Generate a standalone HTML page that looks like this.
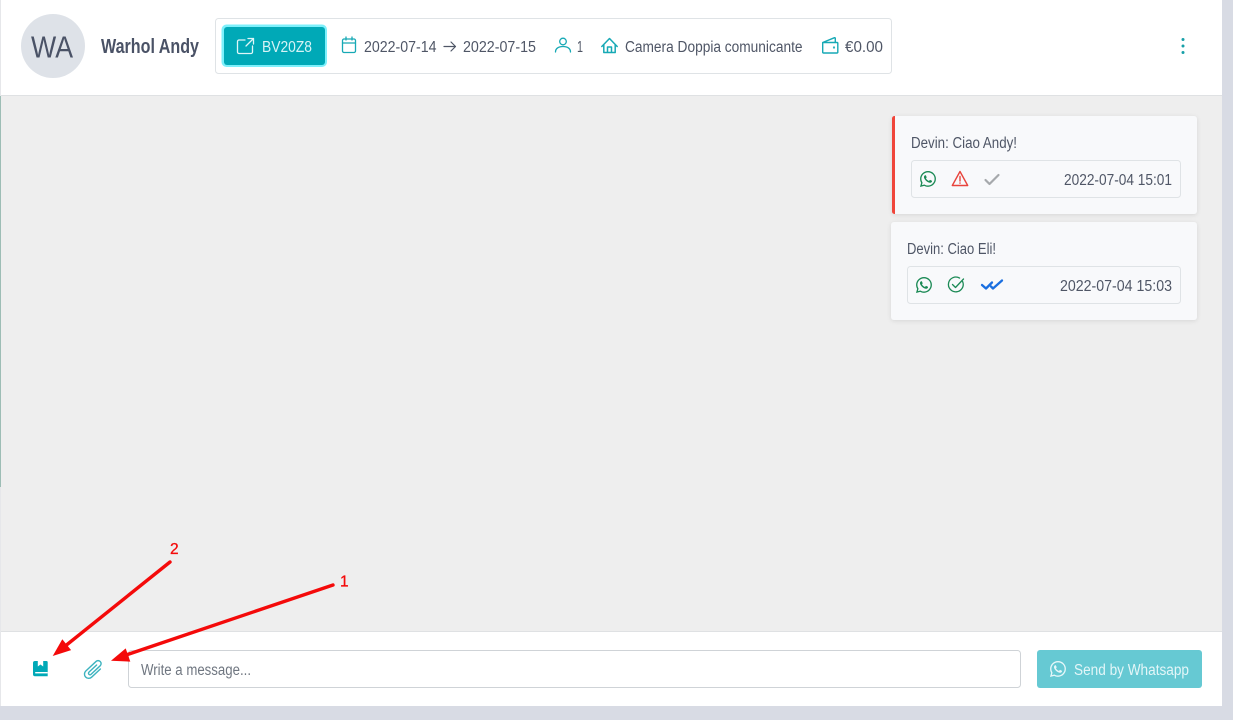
<!DOCTYPE html>
<html lang="en">
<head>
<meta charset="utf-8">
<title>Warhol Andy</title>
<style>
html,body{margin:0;padding:0;width:1233px;height:720px;overflow:hidden;background:#d8dbe4}
svg{display:block}
text{font-family:"Liberation Sans",sans-serif;fill:#4f5666;font-size:15.5px}
.ic{fill:none;stroke:#17a9b5;stroke-width:1.3;stroke-linecap:round;stroke-linejoin:round}
</style>
</head>
<body>
<svg width="1233" height="720" viewBox="0 0 1233 720" xmlns="http://www.w3.org/2000/svg">
<defs>
<path id="wa" d="M13.601 2.326A7.854 7.854 0 0 0 7.994 0C3.627 0 .068 3.558.064 7.926c0 1.399.366 2.76 1.057 3.965L0 16l4.204-1.102a7.933 7.933 0 0 0 3.79.965h.004c4.368 0 7.926-3.558 7.93-7.93A7.898 7.898 0 0 0 13.6 2.326zM7.994 14.521a6.573 6.573 0 0 1-3.356-.92l-.24-.144-2.494.654.666-2.433-.156-.251a6.56 6.56 0 0 1-1.007-3.505c0-3.626 2.957-6.584 6.591-6.584a6.56 6.56 0 0 1 4.66 1.931 6.557 6.557 0 0 1 1.928 4.66c-.004 3.639-2.961 6.592-6.592 6.592zm3.615-4.934c-.197-.099-1.17-.578-1.353-.646-.182-.065-.315-.099-.445.099-.133.197-.513.646-.627.775-.114.133-.232.148-.43.05-.197-.1-.836-.308-1.592-.985-.59-.525-.985-1.175-1.103-1.372-.114-.198-.011-.304.088-.403.087-.088.197-.232.296-.346.1-.114.133-.198.198-.33.065-.134.034-.248-.015-.347-.05-.099-.445-1.076-.612-1.47-.16-.389-.323-.335-.445-.34-.114-.007-.247-.007-.38-.007a.729.729 0 0 0-.529.247c-.182.198-.691.677-.691 1.654 0 .977.71 1.916.81 2.049.098.133 1.394 2.132 3.383 2.992.47.205.84.326 1.129.418.475.152.904.129 1.246.08.38-.058 1.171-.48 1.338-.943.164-.464.164-.86.114-.943-.049-.084-.182-.133-.38-.232z"/>
<filter id="sh" x="-5%" y="-10%" width="110%" height="125%"><feDropShadow dx="0" dy="1" stdDeviation="2" flood-color="#000" flood-opacity=".1"/></filter>
</defs>

<!-- page frame -->
<rect width="1233" height="720" fill="#d8dbe4"/>
<rect x="0" y="0" width="1222" height="706" fill="#fff"/>
<rect x="0" y="0" width="1" height="706" fill="#e6e7ea"/>
<rect x="1" y="96" width="1221" height="535" fill="#eeeeee"/>
<rect x="1" y="95" width="1221" height="1" fill="#dfe1e3"/>
<rect x="1" y="631" width="1221" height="1" fill="#dfe1e3"/>
<rect x="0" y="96" width="1" height="391" fill="#9dbdb5"/>

<!-- header -->
<circle cx="53" cy="46" r="32" fill="#dee2e8"/>
<text x="31" y="57.500" style="font-size:31px;fill:#4a5266" textLength="42" lengthAdjust="spacingAndGlyphs">WA</text>
<text x="101" y="53" style="font-size:20px;font-weight:bold;fill:#4a5266" textLength="98" lengthAdjust="spacingAndGlyphs">Warhol Andy</text>

<rect x="215.500" y="18.500" width="676" height="55" rx="3" fill="#fff" stroke="#dfe3e6"/>
<rect x="221.500" y="24.500" width="105.500" height="42.500" rx="5" fill="#7df0fb"/>
<rect x="224" y="27" width="101" height="38" rx="3" fill="#00a9b7"/>
<g fill="none" stroke="#dff6f8" stroke-width="1.300" stroke-linecap="round" stroke-linejoin="round">
<path d="M245 40h-6a1.500 1.500 0 0 0-1.500 1.500v10.500a1.500 1.500 0 0 0 1.500 1.500h12a1.500 1.500 0 0 0 1.500-1.500v-6"/>
<path d="M248 38.500h5.500v5.500M253.500 38.500l-7.500 7.500"/>
</g>
<text x="262" y="52" style="font-size:15.500px;fill:#d6f3f6" textLength="50" lengthAdjust="spacingAndGlyphs">BV20Z8</text>

<!-- calendar -->
<g class="ic"><rect x="342.500" y="39" width="13" height="13.500" rx="1.500"/><path d="M342.500 43h13M346 37v3M352 37v3"/></g>
<text x="364" y="52" textLength="72.500" lengthAdjust="spacingAndGlyphs">2022-07-14</text>
<path d="M444 46.500h11.500M451 42l4.500 4.500-4.500 4.500" fill="none" stroke="#4f5666" stroke-width="1.200" stroke-linecap="round" stroke-linejoin="round"/>
<text x="463" y="52" textLength="73" lengthAdjust="spacingAndGlyphs">2022-07-15</text>
<!-- person -->
<g class="ic"><circle cx="563" cy="41.500" r="3.300"/><path d="M555.500 52c0-3.500 3-5.500 7.500-5.500s7.500 2 7.500 5.500"/></g>
<text x="577" y="52" textLength="6" lengthAdjust="spacingAndGlyphs">1</text>
<!-- house -->
<g class="ic" style="stroke-width:1.500"><path d="M601.800 46.500l7.700-8 7.700 8M603.800 45v7.500h11.400V45M607.500 52.500V47h4v5.500"/></g>
<text x="625" y="52" textLength="177.500" lengthAdjust="spacingAndGlyphs">Camera Doppia comunicante</text>
<!-- wallet -->
<g class="ic" style="stroke-width:1.400"><path d="M823 42.500h14a.8.8 0 0 1 .8.8v8.900a.8.8 0 0 1-.8.8H823.500a.8.8 0 0 1-.8-.8V42.500l11.800-4.800a.6.6 0 0 1 .8.6v4"/><circle cx="834" cy="47.500" r=".4"/></g>
<text x="845" y="52" textLength="38" lengthAdjust="spacingAndGlyphs">€0.00</text>

<!-- kebab -->
<g fill="#17a0a8"><circle cx="1183" cy="39.500" r="1.500"/><circle cx="1183" cy="46" r="1.500"/><circle cx="1183" cy="52.500" r="1.500"/></g>

<!-- message 1 -->
<rect x="892" y="116" width="305" height="98" rx="3" fill="#f8f9fb" filter="url(#sh)"/>
<path d="M895 116h-0.500a2.500 2.500 0 0 0-2.500 2.500v93a2.500 2.500 0 0 0 2.500 2.500h0.500z" fill="#f0453a"/>
<text x="911" y="148" textLength="106" lengthAdjust="spacingAndGlyphs">Devin: Ciao Andy!</text>
<rect x="911.500" y="160.500" width="269" height="37" rx="3" fill="#f8f9fb" stroke="#dfe3e6"/>
<use href="#wa" x="920" y="171" fill="#1b8a55"/>
<g fill="none" stroke="#e8443c" stroke-width="1.400" stroke-linejoin="round" stroke-linecap="round"><path d="M960 171.500l7.700 14h-15.400z"/><path d="M960 176.500v4.500M960 183v.2"/></g>
<path d="M985.500 180l4 4 9-9" fill="none" stroke="#a6a9ac" stroke-width="2.200" stroke-linecap="round" stroke-linejoin="round"/>
<text x="1064" y="185" style="font-size:16px" textLength="108" lengthAdjust="spacingAndGlyphs">2022-07-04 15:01</text>

<!-- message 2 -->
<rect x="891" y="222" width="306" height="98" rx="3" fill="#f8f9fb" filter="url(#sh)"/>
<text x="907" y="254" textLength="89" lengthAdjust="spacingAndGlyphs">Devin: Ciao Eli!</text>
<rect x="907.500" y="266.500" width="273" height="37" rx="3" fill="#f8f9fb" stroke="#dfe3e6"/>
<use href="#wa" x="916" y="277" fill="#1b8a55"/>
<g fill="none" stroke="#1b8a55" stroke-width="1.300" stroke-linecap="round" stroke-linejoin="round"><path d="M962.600 281.500a7.400 7.400 0 1 1-3-3.400"/><path d="M952.500 284.500l3 3 8-8.500"/></g>
<g fill="none" stroke="#1a6fe0" stroke-width="2.300" stroke-linecap="round" stroke-linejoin="round"><path d="M982 285l4 3.500 6-6"/><path d="M991 286.500l2 2 9-8"/></g>
<text x="1060" y="291" style="font-size:16px" textLength="112" lengthAdjust="spacingAndGlyphs">2022-07-04 15:03</text>

<!-- footer -->
<path d="M35 661h11.500a1.200 1.200 0 0 1 1.200 1.200V676.300H35a2 2 0 0 1-2-2V663a2 2 0 0 1 2-2z" fill="#00a9b7"/>
<path d="M37.800 661h5.400v5.500l-2.700-2-2.700 2z" fill="#fff"/>
<rect x="35.200" y="672" width="12.500" height="1.400" fill="#fff"/>
<path transform="translate(94 669.500) rotate(-43)" d="M5 -1.500H-5.500a1.500 1.500 0 0 0 0 3H7a3 3 0 0 0 0-6H-7a4.200 4.200 0 0 0 0 8.500H5" fill="none" stroke="#3db3bf" stroke-width="1.400" stroke-linecap="round" stroke-linejoin="round"/>

<rect x="128.500" y="650.500" width="892" height="37" rx="3" fill="#fff" stroke="#cfd3d7"/>
<text x="141" y="675" textLength="110" lengthAdjust="spacingAndGlyphs" style="font-size:15.500px;fill:#6f7680">Write a message...</text>

<rect x="1037" y="650" width="165" height="38" rx="3" fill="#66c9d3"/>
<use href="#wa" x="1050" y="661" fill="#e6f7f9"/>
<text x="1074" y="675" textLength="115" lengthAdjust="spacingAndGlyphs" style="font-size:15.500px;fill:#e3f6f8">Send by Whatsapp</text>

<!-- annotations -->
<g stroke="#f40a0a" stroke-width="3.400" stroke-linecap="round" fill="none">
<path d="M170 562L64 647"/>
<path d="M333 585L126 655"/>
</g>
<g fill="#f40a0a">
<polygon points="52.700,656 71.100,650.100 62.300,639.300"/>
<polygon points="111,660.700 130.300,661.600 125.700,648.400"/>
</g>
<text x="170" y="554" style="font-size:15.500px;fill:#f40a0a;stroke:#f40a0a;stroke-width:.3">2</text>
<text x="340" y="586.500" style="font-size:15.500px;fill:#f40a0a;stroke:#f40a0a;stroke-width:.3">1</text>
</svg>
</body>
</html>
